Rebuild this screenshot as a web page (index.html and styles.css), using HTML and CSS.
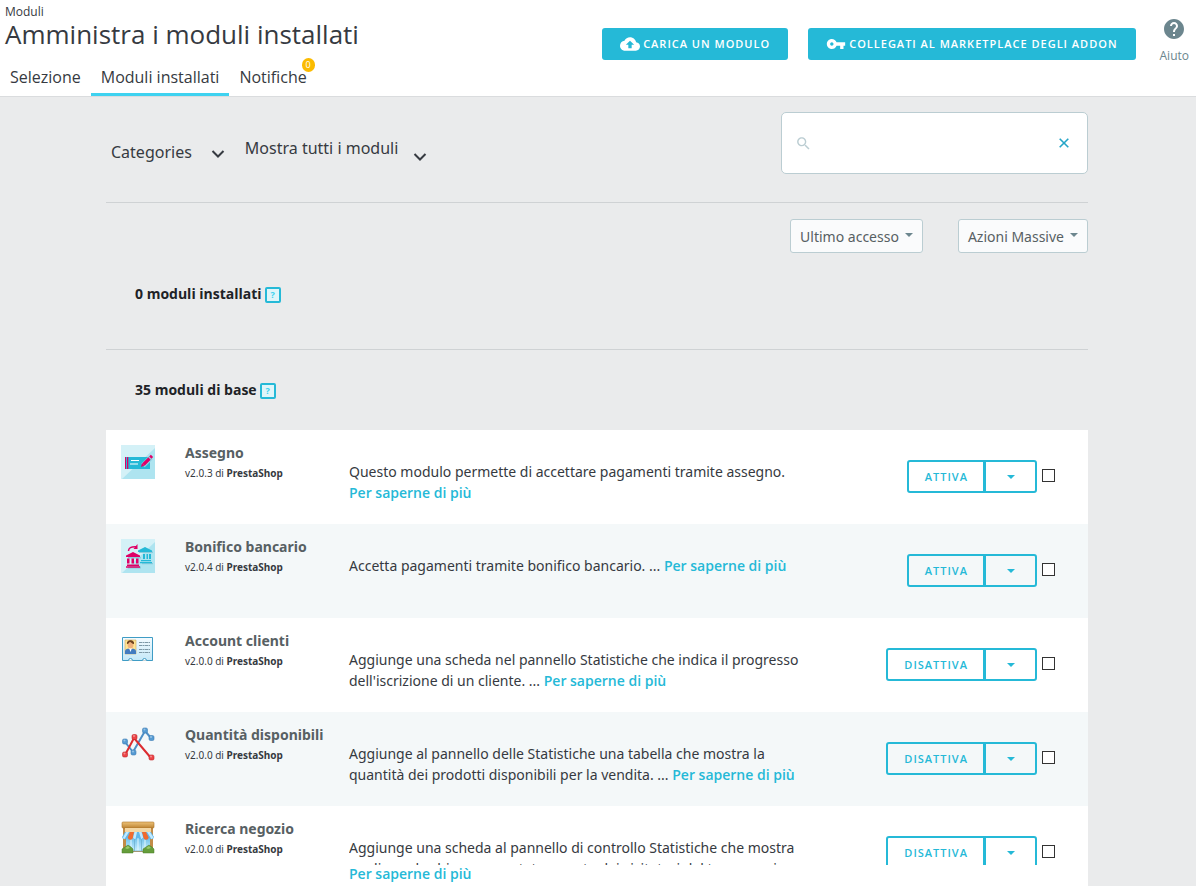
FILE: index.html
```html
<!DOCTYPE html>
<html lang="it">
<head>
<meta charset="utf-8">
<title>Amministra i moduli installati</title>
<link rel="stylesheet" href="styles.css">
</head>
<body>
<header class="header">
  <div class="heading">
    <div class="breadcrumb">Moduli</div>
    <h1 class="title">Amministra i moduli installati</h1>
    <nav class="tabs">
      <a class="tab" href="#">Selezione</a>
      <a class="tab tab-active" href="#">Moduli installati</a>
      <a class="tab" href="#">Notifiche<span class="badge">0</span></a>
    </nav>
  </div>
  <div class="toolbar">
    <button class="btn-primary" type="button">
      <svg class="btn-icon" viewBox="0 0 24 24"><path d="M19.35 10.04C18.67 6.59 15.64 4 12 4 9.11 4 6.6 5.64 5.35 8.04 2.34 8.36 0 10.91 0 14c0 3.31 2.69 6 6 6h13c2.76 0 5-2.24 5-5 0-2.64-2.05-4.78-4.65-4.96zM14 13v4h-4v-4H7l5-5 5 5h-3z"/></svg>
      Carica un modulo
    </button>
    <button class="btn-primary" type="button">
      <svg class="btn-icon" viewBox="0 0 24 24"><path d="M12.65 10C11.83 7.67 9.61 6 7 6c-3.31 0-6 2.69-6 6s2.69 6 6 6c2.61 0 4.83-1.67 5.65-4H17v4h4v-4h2v-4H12.65zM7 14c-1.1 0-2-.9-2-2s.9-2 2-2 2 .9 2 2-.9 2-2 2z"/></svg>
      Collegati al marketplace degli Addon
    </button>
    <a class="help" href="#">
      <svg class="help-icon" viewBox="0 0 24 24"><path d="M12 2C6.48 2 2 6.48 2 12s4.48 10 10 10 10-4.48 10-10S17.52 2 12 2zm1 17h-2v-2h2v2zm2.07-7.75l-.9.92C13.45 12.9 13 13.5 13 15h-2v-.5c0-1.1.45-2.1 1.17-2.83l1.24-1.26c.37-.36.59-.86.59-1.41 0-1.1-.9-2-2-2s-2 .9-2 2H8c0-2.21 1.79-4 4-4s4 1.79 4 4c0 .88-.36 1.68-.93 2.25z"/></svg>
      Aiuto
    </a>
  </div>
</header>
<main class="main">
  <section class="filters">
    <button class="filter" type="button">Categories
      <svg class="chevron" viewBox="0 0 14 10"><path d="M1.500 2 7 7.500 12.500 2"/></svg>
    </button>
    <button class="filter filter-status" type="button">Mostra tutti i moduli
      <svg class="chevron" viewBox="0 0 14 10"><path d="M1.500 2 7 7.500 12.500 2"/></svg>
    </button>
    <div class="search">
      <svg class="search-icon" viewBox="0 0 24 24"><path d="M15.500 14h-.79l-.28-.27C15.410 12.590 16 11.110 16 9.500 16 5.910 13.090 3 9.500 3S3 5.910 3 9.500 5.910 16 9.500 16c1.610 0 3.090-.59 4.230-1.570l.27.28v.79l5 4.990L20.490 19l-4.990-5zm-6 0C7.010 14 5 11.990 5 9.500S7.010 5 9.500 5 14 7.010 14 9.500 11.990 14 9.500 14z"/></svg>
      <input class="search-input" type="text" aria-label="Cerca">
      <button class="clear" type="button" aria-label="Cancella"><svg class="clear-icon" viewBox="0 0 10 10"><path d="M.7.7l8.600 8.600M9.300.7.7 9.300"/></svg></button>
    </div>
  </section>
  <section class="sorting">
    <button class="select" type="button">Ultimo accesso<span class="caret"></span></button>
    <button class="select" type="button">Azioni Massive<span class="caret"></span></button>
  </section>
  <section class="group group-empty">
    <h2 class="group-title">0 moduli installati</h2><button class="info" type="button">?</button>
  </section>
  <section class="group">
    <h2 class="group-title">35 moduli di base</h2><button class="info" type="button">?</button>
  </section>
  <div class="list">
    <article class="module">
      <svg class="logo" viewBox="0 0 34 34">
        <path fill="#d4f1f7" d="M0 0h34v34H0z"/><path fill="#aee4f0" d="M34 3v31H1z"/>
        <path fill="#25b9d7" d="M5 12h24v12H5z"/><path fill="#df0067" d="M4 12h1v12H4zM6 12h1.300v12H6z"/>
        <path stroke="#fff" stroke-width="1.200" d="M10 15.500h8M9 19h8"/>
        <path stroke="#8fd6e5" stroke-width="5" d="M22 20.500l8-8"/>
        <path stroke="#df0067" stroke-width="3.200" d="M22.500 19.500l6-6M29.300 12.600l1.700-1.700"/><path fill="#df0067" d="M21 18l2.500 2.500L20 22z"/>
      </svg>
      <div class="info-col"><h3 class="name">Assegno</h3><p class="version">v2.0.3 di <b>PrestaShop</b></p></div>
      <p class="description">Questo modulo permette di accettare pagamenti tramite assegno. <a class="more" href="#">Per saperne di più</a></p>
      <div class="actions">
        <div class="split"><button class="act" type="button">Attiva</button><button class="act act-menu" type="button" aria-label="Altre azioni"><span class="caret caret-blue"></span></button></div>
        <input class="check" type="checkbox" aria-label="Seleziona Assegno">
      </div>
    </article>
    <article class="module">
      <svg class="logo" viewBox="0 0 34 34">
        <path fill="#d4f1f7" d="M0 0h34v34H0z"/><path fill="#aee4f0" d="M34 3v31H1z"/>
        <path fill="#8bcbdc" d="M18 12.500h14v1.500H18zM21 24h11v1.300H21z"/>
        <path fill="#25b9d7" d="M24 8l7 3.500V13H17v-1.500zM22 15h2v5h-2zM25.500 15h1.500v5h-1.500zM28 15h2v5h-2zM20 21h10v1.300H20zM19 23h12v1.300H19z"/>
        <path fill="#8bcbdc" d="M7 18h13v1.500H7zM7 27.500h13V29.500H7z"/>
        <path fill="#df0067" d="M12 13l7 3.500V18H5v-1.500zM6 19.500h2.500v5H6zM10.500 19.500H13v5h-2.500zM15 19.500h2.500v5H15zM6 25.500h12V27H6zM5 27.300h14v1.400H5z"/>
        <path fill="none" stroke="#df0067" stroke-width="1.500" d="M7.500 12c0-3.200 2.500-4.500 7.500-4.300"/><path fill="#df0067" d="M16.500 5v5h-4z"/>
      </svg>
      <div class="info-col"><h3 class="name">Bonifico bancario</h3><p class="version">v2.0.4 di <b>PrestaShop</b></p></div>
      <p class="description">Accetta pagamenti tramite bonifico bancario. ... <a class="more" href="#">Per saperne di più</a></p>
      <div class="actions">
        <div class="split"><button class="act" type="button">Attiva</button><button class="act act-menu" type="button" aria-label="Altre azioni"><span class="caret caret-blue"></span></button></div>
        <input class="check" type="checkbox" aria-label="Seleziona Bonifico bancario">
      </div>
    </article>
    <article class="module">
      <svg class="logo" viewBox="0 0 34 34">
        <defs><linearGradient id="card" x2="0" y2="1"><stop stop-color="#f4fbff"/><stop offset="1" stop-color="#c4e8f8"/></linearGradient></defs>
        <path fill="#c7d2d6" d="M2 27h30v1H2z"/>
        <path fill="url(#card)" stroke="#3f9cc5" d="M1.500 4.500h30v23h-6a2 2 0 0 0-4 0h-10a2 2 0 0 0-4 0h-6z"/>
        <path fill="#ffe594" stroke="#cba95c" stroke-width=".6" d="M4 7h11v14H4z"/>
        <path fill="#437cc0" d="M4 21v-3c1-3 4-2 5.500-2s4.500-1 5.500 2v3z"/><path fill="#fff" d="M8 15h3l-1.500 4z"/>
        <ellipse cx="9.500" cy="11.500" rx="3" ry="4" fill="#efb27b"/><path fill="#6c421e" d="M6 11c-1-5 8-5 7 0-2 0-3-2-4-2s-1 2-3 2z"/>
        <path stroke="#7d98a6" stroke-width="1" stroke-dasharray="3 .5 2 .5" d="M18 9.500h11M18 12.500h11M18 16.500h11M18 19.500h11"/>
      </svg>
      <div class="info-col"><h3 class="name">Account clienti</h3><p class="version">v2.0.0 di <b>PrestaShop</b></p></div>
      <p class="description">Aggiunge una scheda nel pannello Statistiche che indica il progresso dell'iscrizione di un cliente. ... <a class="more" href="#">Per saperne di più</a></p>
      <div class="actions">
        <div class="split"><button class="act" type="button">Disattiva</button><button class="act act-menu" type="button" aria-label="Altre azioni"><span class="caret caret-blue"></span></button></div>
        <input class="check" type="checkbox" aria-label="Seleziona Account clienti">
      </div>
    </article>
    <article class="module">
      <svg class="logo" viewBox="0 0 34 34">
        <g fill="none" stroke-width="2" stroke-linejoin="round"><path stroke="#4f8fc6" d="M4 15l8 10L24 4l6 7"/><path stroke="#dc2c30" d="M4 28l9-17 17 20"/></g>
        <g fill="#559bd3" stroke="#3c7cb4" stroke-width=".6"><rect x="1.500" y="12" width="5" height="5" rx="1.500"/><rect x="10" y="23" width="5" height="5" rx="1.500"/><rect x="21.500" y="1" width="5" height="5" rx="1.500"/><rect x="28" y="8.500" width="5" height="5" rx="1.500"/></g>
        <g fill="#ec4447" stroke="#c22226" stroke-width=".6"><rect x="1.500" y="25" width="5" height="5" rx="1.500"/><rect x="11" y="7.500" width="5" height="5" rx="1.500"/><rect x="28" y="28" width="5" height="5" rx="1.500"/></g>
        <g fill="#fff" opacity=".4"><circle cx="3.500" cy="13.500" r="1"/><circle cx="12" cy="24.500" r="1"/><circle cx="23.500" cy="2.500" r="1"/><circle cx="30" cy="10" r="1"/><circle cx="3.500" cy="26.500" r="1"/><circle cx="13" cy="9" r="1"/><circle cx="30" cy="29.500" r="1"/></g>
      </svg>
      <div class="info-col"><h3 class="name">Quantità disponibili</h3><p class="version">v2.0.0 di <b>PrestaShop</b></p></div>
      <p class="description">Aggiunge al pannello delle Statistiche una tabella che mostra la quantità dei prodotti disponibili per la vendita. ... <a class="more" href="#">Per saperne di più</a></p>
      <div class="actions">
        <div class="split"><button class="act" type="button">Disattiva</button><button class="act act-menu" type="button" aria-label="Altre azioni"><span class="caret caret-blue"></span></button></div>
        <input class="check" type="checkbox" aria-label="Seleziona Quantità disponibili">
      </div>
    </article>
    <article class="module module-last">
      <svg class="logo" viewBox="0 0 34 34">
        <defs><linearGradient id="wood" x2="0" y2="1"><stop stop-color="#edc278"/><stop offset="1" stop-color="#bd8434"/></linearGradient><linearGradient id="glass" x2="0" y2="1"><stop stop-color="#68bde8"/><stop offset="1" stop-color="#c9efff"/></linearGradient></defs>
        <path fill="#c28c48" d="M2 7h30v24H2z"/><path fill="url(#glass)" d="M5 16h24v14H5z"/>
        <path stroke="#e4f8ff" d="M10 17v13M17 17v13M24 17v13"/><path stroke="#68aacb" stroke-width=".7" d="M13.500 17v13M20.500 17v13M5 30h24"/>
        <rect x="1" y="1" width="32" height="6" rx="1" fill="url(#wood)" stroke="#ad7226" stroke-width=".6"/><path fill="#f3d7a5" d="M4 7h26v4H4z"/>
        <path fill="#61b7ea" d="M4 11h26l3 5a2.700 2.700 0 0 1-5.300 0 2.700 2.700 0 0 1-5.400 0 2.700 2.700 0 0 1-5.300 0 2.700 2.700 0 0 1-5.300 0 2.700 2.700 0 0 1-5.400 0A2.700 2.700 0 0 1 1 16z"/>
        <path fill="#f06a2e" d="M9 11h4l-1 5.500a2.700 2.700 0 0 1-5.300 0zM21 11h4l2.700 5.500a2.700 2.700 0 0 1-5.300 0z"/><path fill="#c2eaff" d="M13.500 11h2.500l-1.500 7a2.500 2.500 0 0 1-2.400-1.500zM18 11h2.500l1.700 5.500-2 1.700zM5 11h3l-4.500 7-1.700-1zM26 11h3l3.500 5.500-2 1.700z"/>
        <path fill="#659d3b" stroke="#487e28" stroke-width=".5" d="M1 32v-4l3-2 3-2 3 2 2 2v4zM22 32v-4l3-2 3-2 3 2 2 2v4z"/><path fill="#9bc96b" d="M4 27l3-2 2 2-3 1zM25 27l3-2 2 2-3 1z"/>
      </svg>
      <div class="info-col"><h3 class="name">Ricerca negozio</h3><p class="version">v2.0.0 di <b>PrestaShop</b></p></div>
      <div class="description"><p class="excerpt">Aggiunge una scheda al pannello di controllo Statistiche che mostra quali parole chiave sono state cercate dai visitatori del tuo negozio.</p><a class="more more-block" href="#">Per saperne di più</a></div>
      <div class="actions actions-clipped">
        <div class="split"><button class="act" type="button">Disattiva</button><button class="act act-menu" type="button" aria-label="Altre azioni"><span class="caret caret-blue"></span></button></div>
        <input class="check" type="checkbox" aria-label="Seleziona Ricerca negozio">
      </div>
    </article>
  </div>
</main>
</body>
</html>
```
FILE: styles.css
```css
* { box-sizing: border-box; }
body {
  margin: 0;
  min-height: 100vh;
  display: flex;
  flex-direction: column;
  background: #eaebec;
  color: #363a41;
  font: 14px/21px "Noto Sans", "Open Sans", sans-serif;
}
h1, h2, h3, p { margin: 0; }
a { color: inherit; text-decoration: none; }
button { margin: 0; font: inherit; color: inherit; cursor: pointer; }

.header {
  display: flex;
  justify-content: space-between;
  height: 97px;
  padding-right: 7px;
  background: #fff;
  border-bottom: 1px solid #dadcde;
  font-family: "Open Sans", sans-serif;
}
.breadcrumb { padding: 4px 0 0 5px; font-size: 12px; line-height: 16px; }
.title { padding-left: 5px; font-size: 26px; line-height: 28px; font-weight: 400; }
.tabs { display: flex; margin-top: 10px; }
.tab { position: relative; height: 38px; padding: 8px 10px 0; font-size: 16px; line-height: 22px; }
.tab-active { border-bottom: 3px solid #3ed2f0; }
.badge {
  position: absolute;
  top: 0;
  right: 2px;
  width: 13px;
  height: 14px;
  border-radius: 7px;
  background: #fbbb00;
  color: #fff;
  font-size: 9px;
  line-height: 14px;
  text-align: center;
}
.toolbar { display: flex; align-items: flex-start; gap: 20px; padding-top: 28px; }
.btn-primary {
  display: flex;
  align-items: center;
  gap: 3px;
  height: 32px;
  padding: 0 18px;
  border: 0;
  border-radius: 3px;
  background: #25b9d7;
  color: #fff;
  font-size: 11px;
  line-height: 20px;
  font-weight: 600;
  letter-spacing: 1px;
  text-transform: uppercase;
  white-space: nowrap;
}
.btn-icon { width: 20px; height: 20px; fill: #fff; }
.help {
  display: flex;
  flex-direction: column;
  align-items: center;
  gap: 4px;
  margin: -11px 0 0 4px;
  color: #6c868e;
  font-size: 12px;
}
.help-icon { width: 24px; height: 24px; fill: #6c868e; }

.main { flex: 1; display: flex; flex-direction: column; padding: 15px 108px 0 106px; }
.filters {
  display: flex;
  align-items: flex-start;
  height: 91px;
  border-bottom: 1px solid #cfd2d4;
}
.filter {
  display: flex;
  gap: 19px;
  margin-top: 29px;
  padding: 0 0 0 5px;
  border: 0;
  background: none;
  font-size: 16px;
  line-height: 22px;
}
.filter-status { gap: 15px; margin: 25px 0 0 15px; }
.chevron { width: 14px; height: 10px; margin-top: 8px; fill: none; stroke: #363a41; stroke-width: 2; }
.filter-status .chevron { margin-top: 15px; }
.search {
  display: flex;
  align-items: center;
  width: 307px;
  height: 62px;
  margin-left: auto;
  padding: 0 18px 0 13px;
  border: 1px solid #bbcdd2;
  border-radius: 5px;
  background: #fff;
}
.search-icon { width: 17px; height: 17px; fill: #bbcdd2; }
.search-input { flex: 1; min-width: 0; border: 0; outline: 0; background: none; font: inherit; }
.clear { display: flex; padding: 0; border: 0; background: none; }
.clear-icon { width: 10px; height: 10px; fill: none; stroke: #25a5c7; stroke-width: 1.6; }

.sorting { display: flex; justify-content: flex-end; gap: 35px; padding-top: 16px; }
.select {
  display: flex;
  align-items: center;
  gap: 6px;
  height: 34px;
  padding: 0 9px;
  border: 1px solid #bbcdd2;
  border-radius: 3px;
  background: #fafbfc;
  color: #576063;
}
.caret {
  width: 8px;
  border: 4px solid transparent;
  border-top-color: #6c868e;
  border-bottom: 0;
}
.select .caret { margin-bottom: 3px; }
.caret-blue { display: block; margin: 0 auto; border-top-color: #25b9d7; }

.group { display: flex; align-items: flex-start; gap: 3px; height: 80px; padding: 29px 0 0 29px; }
.group-empty { height: 97px; padding-top: 30px; border-bottom: 1px solid #cfd2d4; }
.group-title { color: #202226; font: 700 14px/21px "Open Sans", sans-serif; }
.info {
  width: 16px;
  height: 16px;
  margin-top: 4px;
  padding: 0;
  border: 2px solid #25b9d7;
  border-radius: 2px;
  background: #dff5f9;
  color: #3ed2f0;
  font-size: 9px;
  line-height: 12px;
  font-weight: 700;
}

.list { flex: 1; display: flex; flex-direction: column; }
.module {
  display: grid;
  grid-template-columns: 64px 164px minmax(0, 1fr) 242px;
  align-items: start;
  min-height: 94px;
  padding: 0 33px 0 15px;
  background: #fff;
}
.module:nth-child(even) { background: #f4f8f9; }
.module-last { flex: 1; min-height: 80px; }
.logo { width: 34px; height: 34px; margin-top: 15px; }
.info-col { padding-top: 12px; }
.name { color: #576063; font-size: 14px; line-height: 21px; font-weight: 700; white-space: nowrap; }
.version { font-size: 10px; line-height: 20px; }
.description { padding-top: 31px; }
.excerpt { height: 28px; overflow: hidden; }
.more { color: #25b9d7; font-family: "Open Sans", sans-serif; font-weight: 600; white-space: nowrap; }
.more-block { display: block; line-height: 17px; }
.actions { display: flex; justify-content: flex-end; align-items: flex-start; gap: 5px; padding-top: 30px; }
.actions-clipped { height: 59px; overflow: hidden; }
.split { display: flex; }
.act {
  height: 33px;
  padding: 0 15px 0 16px;
  border: 2px solid #25b9d7;
  border-radius: 3px 0 0 3px;
  background: none;
  color: #25b9d7;
  font: 600 11px/20px "Open Sans", sans-serif;
  letter-spacing: 1px;
  text-transform: uppercase;
}
.act-menu { width: 53px; margin-left: -1px; border-radius: 0 3px 3px 0; }
.check {
  appearance: none;
  width: 13px;
  height: 13px;
  margin: 9px 0 0;
  border: 1px solid #333;
  background: #fff;
}
```
